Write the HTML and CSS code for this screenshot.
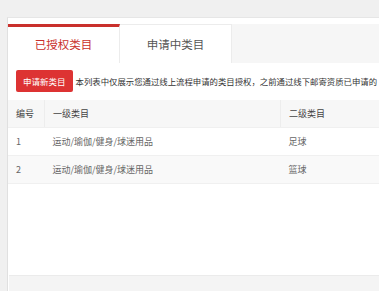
FILE: index.html
```html
<!DOCTYPE html>
<html lang="zh-CN">
<head>
    <meta charset="UTF-8">
    <meta name="viewport" content="width=device-width, initial-scale=1.0">
    <title>已授权类目</title>
    <link rel="stylesheet" href="styles.css">
</head>
<body>
    <div class="page">
        <div class="panel">
            <div class="tabs">
                <div class="tab active">已授权类目</div>
                <div class="tab">申请中类目</div>
            </div>

            <div class="toolbar">
                <button class="apply-btn">申请新类目</button>
                <span class="note">本列表中仅展示您通过线上流程申请的类目授权，之前通过线下邮寄资质已申请的</span>
            </div>

            <div class="table-wrap">
                <table class="cat-table">
                    <thead>
                        <tr>
                            <th class="col-no">编号</th>
                            <th class="col-first">一级类目</th>
                            <th>二级类目</th>
                        </tr>
                    </thead>
                    <tbody>
                        <tr>
                            <td>1</td>
                            <td>运动/瑜伽/健身/球迷用品</td>
                            <td>足球</td>
                        </tr>
                        <tr>
                            <td>2</td>
                            <td>运动/瑜伽/健身/球迷用品</td>
                            <td>篮球</td>
                        </tr>
                    </tbody>
                </table>
            </div>

            <div class="scrollbar"></div>
        </div>
    </div>
</body>
</html>
```

FILE: styles.css
```css
html, body {
    height: 100%;
}

body {
    margin: 0;
    background-color: #f0f0f0;
    font-family: "Noto Sans CJK SC", "Liberation Sans", sans-serif;
    color: #333;
    overflow: hidden;
}

.page {
    height: 100%;
    box-sizing: border-box;
    padding: 17px 0 0 7px;
}

.panel {
    height: 100%;
    box-sizing: border-box;
    width: 600px;
    background-color: #fff;
    border-top: 1px solid #e6e6e6;
    border-left: 1px solid #e0e0e0;
    padding-top: 6px;
    display: flex;
    flex-direction: column;
}

.tabs {
    display: flex;
    height: 39px;
    background-color: #f6f6f6;
}

.tab {
    width: 112px;
    box-sizing: border-box;
    background-color: #fff;
    border-top: 1px solid #ececec;
    border-right: 1px solid #ececec;
    display: flex;
    align-items: center;
    justify-content: center;
    font-size: 11.5px;
    color: #555;
}

.tab.active {
    border-top: 3px solid #c9302c;
    color: #c9302c;
    padding-bottom: 2px;
}

.toolbar {
    display: flex;
    align-items: center;
    gap: 3px;
    padding: 7px 0 0 8px;
    white-space: nowrap;
}

.apply-btn {
    height: 22px;
    padding: 0 7px;
    border: none;
    border-radius: 2px;
    background-color: #dd3333;
    color: #fff;
    font-family: inherit;
    font-size: 8.5px;
    cursor: pointer;
}

.note {
    font-size: 8.4px;
    color: #333;
}

.table-wrap {
    flex: 1;
    margin-top: 8px;
    overflow: hidden;
}

.cat-table {
    width: 100%;
    border-collapse: collapse;
    font-size: 9px;
    color: #666;
}

.cat-table th,
.cat-table td {
    text-align: left;
    font-weight: normal;
    padding: 0 8px;
    height: 27px;
    border-bottom: 1px solid #f0f0f0;
}

.cat-table th {
    background-color: #f7f7f7;
    color: #444;
    border-right: 1px solid #ededed;
}

.cat-table tbody tr:nth-child(2) {
    background-color: #f9f9f9;
}

.col-no {
    width: 20px;
}

.col-first {
    width: 219px;
}

.scrollbar {
    height: 15px;
    margin-left: 1px;
    background-color: #f4f4f4;
    border-top: 1px solid #ebebeb;
}
```
